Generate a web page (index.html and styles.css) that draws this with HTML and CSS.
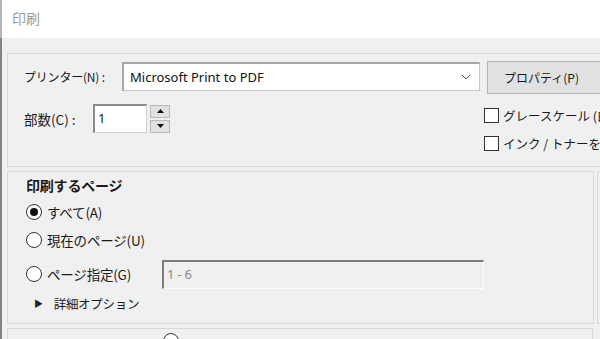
FILE: index.html
```html
<!DOCTYPE html>
<html lang="ja">
<head>
  <meta charset="UTF-8" />
  <title>印刷</title>
  <link rel="stylesheet" href="styles.css">
</head>
<body>

  <div class="titlebar">印刷</div>

  <div class="window">

    <div class="panel printer">
      <div class="row">
        <span class="label">プリンター(N) :</span>
        <div class="combo">
          <span>Microsoft Print to PDF</span>
          <svg class="chevron" width="10" height="6" viewBox="0 0 10 6"><path d="M1 1 L5 5 L9 1" fill="none" stroke="#555" stroke-width="1"/></svg>
        </div>
        <button class="btn">プロパティ(P)</button>
      </div>
      <div class="row second">
        <div class="copies">
          <span class="label short">部数(C) :</span>
          <div class="field">1</div>
          <div class="spin">
            <div class="spin-btn"><svg width="7" height="4" viewBox="0 0 7 4"><path d="M0 4 L3.5 0 L7 4Z" fill="#111"/></svg></div>
            <div class="spin-btn"><svg width="7" height="4" viewBox="0 0 7 4"><path d="M0 0 L3.5 4 L7 0Z" fill="#111"/></svg></div>
          </div>
        </div>
        <div class="checks">
          <label class="check"><span class="box"></span>グレースケール (白黒) で印刷</label>
          <label class="check"><span class="box"></span>インク / トナーを節約</label>
        </div>
      </div>
    </div>

    <div class="middle">
      <div class="panel pages">
        <div class="heading">印刷するページ</div>
        <div class="radio-row"><span class="radio on"></span>すべて(A)</div>
        <div class="radio-row"><span class="radio"></span>現在のページ(U)</div>
        <div class="radio-row range">
          <span class="radio"></span><span class="range-label">ページ指定(G)</span>
          <div class="range-field">1 - 6</div>
        </div>
        <div class="more"><span class="tri">&#9654;</span>詳細オプション</div>
      </div>
      <div class="panel side"></div>
    </div>

    <div class="panel next">
      <span class="radio"></span>
    </div>

  </div>

</body>
</html>
```

FILE: styles.css
```css
body {
  margin: 0;
  width: 600px;
  height: 339px;
  overflow: hidden;
  background: #f0f0f0;
  font-family: "Noto Sans CJK JP", "Noto Sans", sans-serif;
  font-size: 12px;
  color: #1a1a1a;
}

.titlebar {
  height: 38px;
  line-height: 36px;
  padding-left: 10px;
  background: white;
  color: #9c9c9c;
  font-size: 14px;
  border-left: 2px solid #b5b5b5;
}

.window {
  border-left: 2px solid #838383;
  padding: 15px 0 0 5px;
  height: 300px;
}

.panel {
  border: 1px solid #dadada;
  background: #f0f0f0;
}

/* printer block */
.printer {
  width: 640px;
  height: 114px;
  border-right: none;
  padding: 4px 0 0 16px;
  box-sizing: border-box;
}

.row {
  display: flex;
  align-items: center;
}

.label {
  width: 98px;
  letter-spacing: -0.2px;
}

.label.short {
  width: 69px;
  font-size: 13.5px;
  letter-spacing: 0;
}

.combo {
  width: 358px;
  height: 29px;
  box-sizing: border-box;
  background: white;
  border: 1px solid #c8c8c8;
  border-top: 2px solid #a7a7a7;
  border-left: 2px solid #a7a7a7;
  display: flex;
  align-items: center;
  justify-content: space-between;
  padding: 0 8px 0 6px;
  font-family: "Noto Sans", sans-serif;
  font-size: 13px;
  color: #111;
}

.chevron {
  margin-top: 1px;
}

.btn {
  margin-left: 7px;
  width: 120px;
  height: 33px;
  margin-top: 3px;
  background: #e1e1e1;
  border: 1px solid #b4b4b4;
  font-family: "Noto Sans CJK JP", sans-serif;
  font-size: 12px;
  color: #1a1a1a;
  text-align: left;
  padding-left: 16px;
}

.row.second {
  align-items: flex-start;
  margin-top: 5px;
}

.copies {
  width: 460px;
  flex-shrink: 0;
  display: flex;
  align-items: center;
  margin-top: 5px;
}

.field {
  width: 54px;
  height: 29px;
  box-sizing: border-box;
  background: white;
  border: 1px solid #d0d0d0;
  border-top: 2px solid #8a8a8a;
  border-left: 2px solid #8a8a8a;
  padding: 3px 0 0 3px;
  font-family: "Noto Sans", sans-serif;
  font-size: 13px;
}

.spin {
  margin-left: 3px;
  display: flex;
  flex-direction: column;
  gap: 2px;
}

.spin-btn {
  width: 20px;
  height: 13px;
  box-sizing: border-box;
  background: #e1e1e1;
  border: 1px solid #b9b9b9;
  display: flex;
  align-items: center;
  justify-content: center;
}

.checks {
  display: flex;
  flex-direction: column;
  gap: 10px;
  margin-top: 7px;
}

.check {
  display: flex;
  align-items: center;
  white-space: nowrap;
  height: 18px;
  font-size: 12.5px;
}

.box {
  width: 15px;
  height: 15px;
  box-sizing: border-box;
  border: 1px solid #333;
  background: white;
  margin-right: 4px;
}

/* pages block */
.middle {
  display: flex;
  margin-top: 4px;
  gap: 3px;
}

.pages {
  width: 587px;
  height: 153px;
  box-sizing: border-box;
  padding: 3px 0 0 18px;
  flex-shrink: 0;
}

.side {
  width: 40px;
  flex-shrink: 0;
}

.heading {
  font-weight: bold;
  font-size: 14px;
  height: 20px;
  line-height: 20px;
  letter-spacing: -0.2px;
}

.radio-row {
  display: flex;
  align-items: center;
  height: 20px;
  margin-top: 7px;
  font-size: 13.5px;
  letter-spacing: -0.2px;
}

.radio-row + .radio-row {
  margin-top: 8px;
}

.radio-row.range {
  height: 30px;
  margin-top: 9px;
}

.radio {
  width: 16px;
  height: 16px;
  box-sizing: border-box;
  border: 1px solid #333;
  border-radius: 50%;
  background: white;
  margin-right: 5px;
  display: inline-flex;
  align-items: center;
  justify-content: center;
}

.radio.on::after {
  content: "";
  width: 8px;
  height: 8px;
  border-radius: 50%;
  background: #111;
}

.range-label {
  width: 115px;
}

.range-field {
  width: 322px;
  height: 29px;
  box-sizing: border-box;
  border-top: 2px solid #7c7c7c;
  border-left: 2px solid #7c7c7c;
  border-right: 1px solid #fcfcfc;
  border-bottom: 1px solid #fcfcfc;
  padding: 3px 0 0 3px;
  color: #8a8a8a;
  font-family: "Noto Sans", sans-serif;
  font-size: 13px;
}

.more {
  display: flex;
  align-items: center;
  margin-top: 3px;
  height: 22px;
  font-size: 12.5px;
  letter-spacing: -0.3px;
}

.tri {
  font-size: 9px;
  margin: 0 11px 0 8px;
  color: #222;
}

.next {
  margin-top: 4px;
  width: 586px;
  height: 40px;
  padding: 4px 0 0 155px;
  box-sizing: border-box;
}
```
